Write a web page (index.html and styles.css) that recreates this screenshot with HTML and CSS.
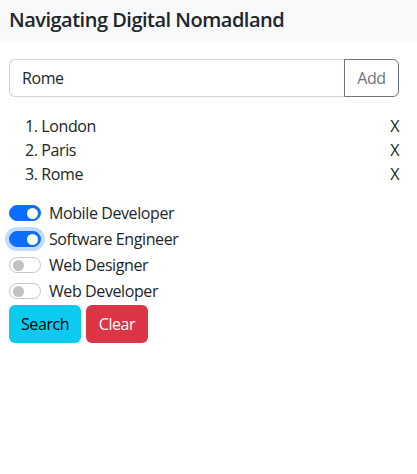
FILE: index.html
```html
<!DOCTYPE html>
<html>
<head>
<meta charset="utf-8">
<link rel="stylesheet" href="styles.css">
</head>
<body>
<header class="topbar"><h1 class="title">Navigating Digital Nomadland</h1></header>
<main class="content">
  <div class="input-group">
    <input class="field" type="text" value="Rome">
    <button class="btn-add">Add</button>
  </div>
  <ol class="cities">
    <li class="city"><span>1. London</span><span class="remove">X</span></li>
    <li class="city"><span>2. Paris</span><span class="remove">X</span></li>
    <li class="city"><span>3. Rome</span><span class="remove">X</span></li>
  </ol>
  <div class="switches">
    <label class="check"><span class="switch on"></span>Mobile Developer</label>
    <label class="check"><span class="switch on focus"></span>Software Engineer</label>
    <label class="check"><span class="switch"></span>Web Designer</label>
    <label class="check"><span class="switch"></span>Web Developer</label>
  </div>
  <div class="actions">
    <button class="btn search">Search</button>
    <button class="btn clear">Clear</button>
  </div>
</main>
</body>
</html>
```
FILE: styles.css
```css
* { box-sizing: border-box; }
body {
  margin: 0;
  font-family: "Open Sans", "Noto Sans", sans-serif;
  font-size: 16px;
  line-height: 24px;
  letter-spacing: -0.4px;
  color: #212529;
  background: #fff;
}
.topbar {
  background: #f8f9fa;
  height: 42px;
  padding: 5px 9px;
}
.title {
  margin: 0;
  font-size: 20px;
  font-weight: 600;
  line-height: 30px;
  letter-spacing: -0.5px;
}
.content { padding: 17px 9px 0 9px; }
.input-group {
  display: flex;
  height: 38px;
  width: 390px;
}
.field {
  flex: 1;
  min-width: 0;
  border: 1px solid #ced4da;
  border-right: none;
  border-radius: 6px 0 0 6px;
  padding: 6px 12px;
  font: inherit;
  letter-spacing: inherit;
  color: #212529;
  background: #fff;
}
.btn-add {
  border: 1px solid #6c757d;
  border-radius: 0 6px 6px 0;
  background: #fff;
  color: #6c757d;
  font: inherit;
  letter-spacing: inherit;
  padding: 6px 12px;
  width: 55px;
}
.cities {
  list-style: none;
  margin: 17px 0 15px 0;
  padding: 0 0 0 16px;
  width: 390px;
}
.city {
  display: flex;
  justify-content: space-between;
  height: 24px;
}
.switches { display: flex; flex-direction: column; }
.check {
  display: flex;
  align-items: center;
  height: 24px;
  margin-bottom: 2px;
  gap: 8px;
}
.switch {
  width: 32px;
  height: 16px;
  border-radius: 8px;
  border: 1px solid #c5c8cb;
  background: #fff;
  position: relative;
}
.switch::after {
  content: "";
  position: absolute;
  top: 1.5px;
  left: 2.5px;
  width: 11px;
  height: 11px;
  border-radius: 50%;
  background: #c0c3c6;
}
.switch.on {
  background: #0d6efd;
  border-color: #0d6efd;
}
.switch.on::after {
  left: auto;
  right: 2.5px;
  background: #fff;
}
.switch.focus { box-shadow: 0 0 0 4px rgba(13, 110, 253, 0.25); }
.actions { display: flex; gap: 5px; }
.btn {
  border: none;
  border-radius: 6px;
  font: inherit;
  letter-spacing: inherit;
  padding: 6px 12px;
  height: 38px;
  line-height: 24px;
}
.search { background: #0dcaf0; color: #000; width: 72px; }
.clear { background: #dc3545; color: #fff; width: 62px; }
```
